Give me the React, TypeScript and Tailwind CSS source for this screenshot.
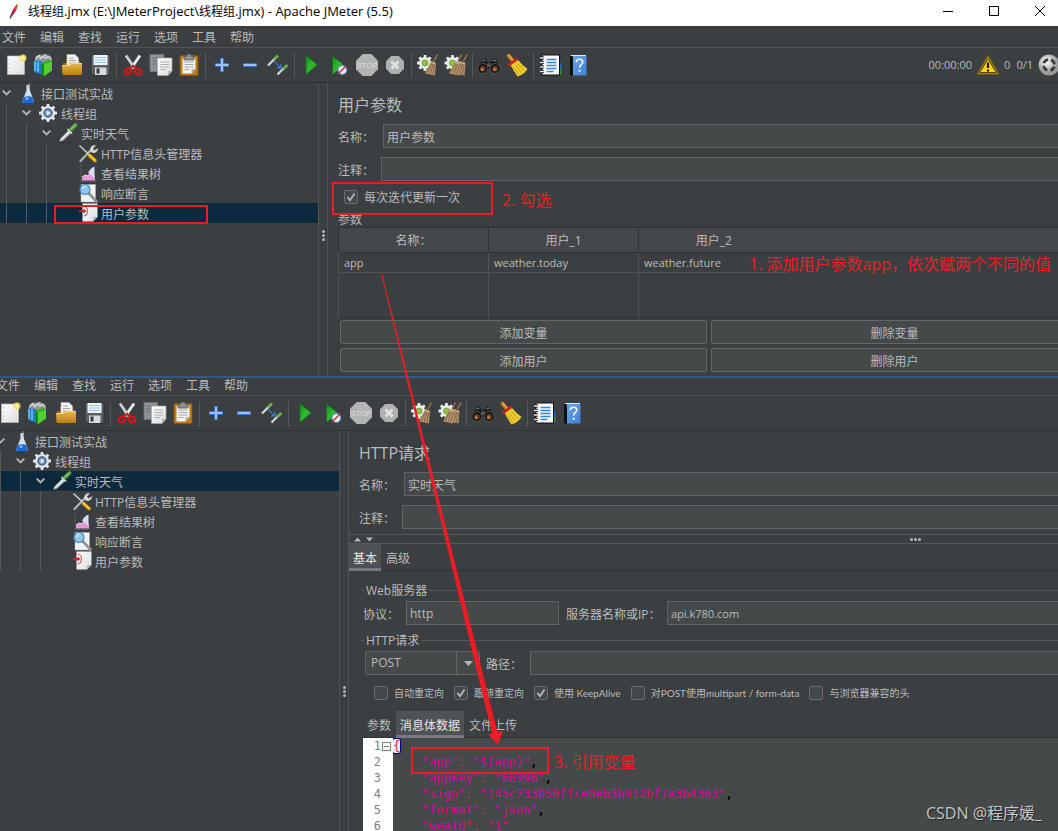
import React from "react";

type IconProps = { children: React.ReactNode };

const Svg = ({ children }: IconProps) => (
  <svg viewBox="0 0 24 24" className="h-6 w-6 shrink-0" aria-hidden="true">
    {children}
  </svg>
);

const Gradients = () => (
  <svg className="absolute h-0 w-0" aria-hidden="true">
    <defs>
      <linearGradient id="paper" x1="0" y1="0" x2="1" y2="1">
        <stop offset="0" stopColor="#ffffff" />
        <stop offset="1" stopColor="#dcdcdc" />
      </linearGradient>
      <linearGradient id="amber" x1="0" y1="0" x2="0" y2="1">
        <stop offset="0" stopColor="#e9b94c" />
        <stop offset="1" stopColor="#bb7f10" />
      </linearGradient>
      <linearGradient id="green" x1="0" y1="0" x2="1" y2="1">
        <stop offset="0" stopColor="#0b8f14" />
        <stop offset="0.5" stopColor="#35b832" />
        <stop offset="1" stopColor="#0a8a10" />
      </linearGradient>
      <linearGradient id="book" x1="0" y1="0" x2="1" y2="1">
        <stop offset="0" stopColor="#6ba4ea" />
        <stop offset="1" stopColor="#3f7fd6" />
      </linearGradient>
      <radialGradient id="glow">
        <stop offset="0" stopColor="#fffbd0" />
        <stop offset="0.5" stopColor="#f6e36a" />
        <stop offset="1" stopColor="#f6e36a" stopOpacity="0" />
      </radialGradient>
      <radialGradient id="ball" cx="0.4" cy="0.35">
        <stop offset="0" stopColor="#ffffff" />
        <stop offset="1" stopColor="#9a9a9a" />
      </radialGradient>
      <linearGradient id="feather" x1="0" y1="1" x2="1" y2="0">
        <stop offset="0" stopColor="#5c2a7e" />
        <stop offset="0.5" stopColor="#c8202c" />
        <stop offset="1" stopColor="#ef7a24" />
      </linearGradient>
    </defs>
  </svg>
);

const gearPoints = [0, 45, 90, 135, 180, 225, 270, 315];

const Gear = ({ x, y, r, fill }: { x: number; y: number; r: number; fill: string }) => (
  <g fill={fill}>
    <circle cx={x} cy={y} r={r} />
    {gearPoints.map((a) => (
      <rect key={a} x={x - 1.4} y={y - r - 2} width="2.8" height="4" rx="0.5" transform={`rotate(${a} ${x} ${y})`} />
    ))}
  </g>
);

const Straw = ({ dx }: { dx: number }) => (
  <g transform={`translate(${dx} 0)`}>
    <path d="M18 8 21.500 1.500" stroke="#9c744a" strokeWidth="1.500" />
    <path d="M15 8 20 9.500 19 22.500 9 20.500Z" fill="#b3926c" />
    <path d="M16 9.500 11 20.500M17.500 10 14 21.500M18.800 10.500 16.800 22" stroke="#7b5c3c" strokeWidth="0.800" />
    <path d="M14.800 9.700 19.800 11.200" stroke="#dcc29c" strokeWidth="0.800" />
  </g>
);

const NoEntry = () => (
  <g>
    <circle cx="15.3" cy="17" r="4.3" fill="#f2f5fb" stroke="#6c93d4" strokeWidth="1.3" />
    <path d="m11.5 20.5 7.5-7.5" stroke="#d8232a" strokeWidth="1.5" />
  </g>
);

const NewIcon = () => (
  <Svg>
    <rect x="3.5" y="3" width="17" height="18.5" fill="url(#paper)" stroke="#b9b9b9" strokeWidth="0.7" />
    <path d="M5.5 6v13" stroke="#b5b5b5" strokeDasharray="1.2 3" />
    <circle cx="19" cy="5" r="4.5" fill="url(#glow)" />
  </Svg>
);
const TemplatesIcon = () => (
  <Svg>
    <path d="M3 7q1-6 6-5 5-2 7 0 4 1 4 5v3H3Z" fill="#8f9598" />
    <path d="M3.500 6.500q1-5 5-1.500M9 6.500q0-5 5-1.500M14 5.500q2-4 5 .5M6 3l2-1M12 2.500l2-.5" stroke="#dfe2e4" fill="none" strokeWidth="1.200" />
    <path d="M1.5 7.500 10 8v13.5L2.5 19Z" fill="#1d83c6" />
    <path d="M3 8.5v9.5M6 8.8v10.4" stroke="#8fd0f4" strokeWidth="1.2" />
    <path d="m9 10 8-3 3 1.5v9L12 23l-3-2Z" fill="#2fae22" />
    <path d="m12 11.5 8-3v9L12 23Z" fill="#53cf35" />
    <path d="m12 11.5-3-1.5v11l3 2Z" fill="#178a17" />
  </Svg>
);
const OpenIcon = () => (
  <Svg>
    <path d="M3 10h3V6l4-1v3h10l1 4v8H3Z" fill="#9c6b12" />
    <path d="M7 1.5h8L18.5 5v9H7Z" fill="#f4f4f4" stroke="#bcbcbc" strokeWidth="0.6" />
    <path d="M9 5h5M9 7.5h7M9 10h7" stroke="#9a9a9a" strokeWidth="0.9" />
    <path d="M2 12h7l2-2h11v10.5q0 1.5-1.5 1.5H4q-1.6 0-1.6-1.5Z" fill="url(#amber)" />
    <path d="M2.6 12.5h7l2-2h10" stroke="#fbe09a" fill="none" strokeWidth="0.8" />
  </Svg>
);
const SaveIcon = () => (
  <Svg>
    <path d="M3 3q0-1 1-1h17q1 0 1 1v18q0 1-1 1H4.5L3 20.5Z" fill="#5a5f62" stroke="#2b2e30" strokeWidth="0.8" />
    <rect x="5.5" y="2" width="14" height="10" fill="#eef4fb" />
    <path d="M7 4.5h11M7 7h11M7 9.500h11" stroke="#9cc0e8" strokeWidth="1.1" />
    <rect x="7" y="14.500" width="11.500" height="7.500" fill="#d8dadb" />
    <rect x="8.500" y="15.500" width="3" height="5" fill="#3a3d3f" />
  </Svg>
);
const CutIcon = () => (
  <Svg>
    <path d="M5 2.500 14 15.500" stroke="#d6d8d9" strokeWidth="2.800" />
    <path d="M19 2.500 10 15.500" stroke="#f0f1f1" strokeWidth="2.800" />
    <path d="M5.600 2 14 14" stroke="#919799" strokeWidth="0.600" />
    <ellipse cx="7" cy="18.500" rx="3.300" ry="2.600" fill="none" stroke="#d3161c" strokeWidth="2.400" transform="rotate(-25 7 18.500)" />
    <ellipse cx="17" cy="18.500" rx="3.300" ry="2.600" fill="none" stroke="#d3161c" strokeWidth="2.400" transform="rotate(25 17 18.500)" />
    <path d="m9 15.500 3-2.500 3 2.500" stroke="#d3161c" strokeWidth="2.200" fill="none" />
  </Svg>
);
const CopyIcon = () => (
  <Svg>
    <rect x="1" y="1.500" width="13.500" height="17" fill="#8f9294" stroke="#70787a" strokeWidth="0.800" />
    <path d="M3.500 5h8M3.500 8h4M3.500 11h4" stroke="#6b6f71" />
    <path d="M8.500 5H23v13l-4 4.500H8.500Z" fill="url(#paper)" stroke="#a5a5a5" strokeWidth="0.700" />
    <path d="M11 9h9M11 11.500h9M11 14h9M11 16.500h6" stroke="#a6a6a6" strokeWidth="0.900" />
    <path d="m19 22.500 0-4.500h4Z" fill="#b8b8b8" />
  </Svg>
);
const PasteIcon = () => (
  <Svg>
    <rect x="3" y="2.500" width="18" height="20" rx="1.500" fill="#bf7a17" stroke="#8a540b" strokeWidth="0.800" />
    <path d="M5.500 5h13v11l-4 4.500h-9Z" fill="#f4f4f3" />
    <path d="M7.500 9h9M7.500 11.500h9M7.500 14h9M7.500 16.500h5" stroke="#9b9b9b" strokeWidth="0.900" />
    <path d="m14.500 20.500 0-4.500h4Z" fill="#b5b5b5" />
    <path d="M7 3.500h2.500q0-2.500 2.500-2.500t2.500 2.500H17V7H7Z" fill="#8d9193" stroke="#55595b" strokeWidth="0.800" />
  </Svg>
);
const PlusIcon = () => (
  <Svg>
    <path d="M12 5v14M5 12h14" stroke="#3a6fc0" strokeWidth="4" />
    <path d="M12 5.700v12.600M5.700 12h12.600" stroke="#9dc1f2" strokeWidth="2" />
  </Svg>
);
const MinusIcon = () => (
  <Svg>
    <path d="M5 12h14" stroke="#3a6fc0" strokeWidth="4" />
    <path d="M5.700 12h12.600" stroke="#9dc1f2" strokeWidth="2" />
  </Svg>
);
const ToggleIcon = () => (
  <Svg>
    <path d="M2 12.500 9 5.500" stroke="#d6d9da" strokeWidth="2.200" />
    <path d="m8 6.500 4-4" stroke="#66b04a" strokeWidth="2.800" />
    <path d="M11.500 21.500 18 15" stroke="#d6d9da" strokeWidth="2.200" />
    <path d="m17 16 4.500-4" stroke="#66b04a" strokeWidth="2.800" />
    <path d="m8.500 8.500 5.500 5.500" stroke="#3c7be0" strokeWidth="1.500" strokeDasharray="2 1" />
    <path d="m15.500 10.500v5h-5Z" fill="#3c7be0" />
  </Svg>
);
const PlayIcon = () => (
  <Svg>
    <path d="M7 2.500 18.500 12 7 21.500Z" fill="url(#green)" stroke="#0b6f12" strokeWidth="0.700" />
  </Svg>
);
const PlayNoPauseIcon = () => (
  <Svg>
    <path d="M5.500 3 17 12 5.500 21.500Z" fill="url(#green)" stroke="#0b6f12" strokeWidth="0.700" />
    <NoEntry />
  </Svg>
);
const StopIcon = () => (
  <Svg>
    <path d="M7.700 1h8.600L23 7.700v8.600L16.300 23H7.700L1 16.300V7.700Z" fill="#b3b4b4" />
    <text x="12" y="15" textAnchor="middle" fontSize="8" fontFamily="Liberation Sans" fill="#dcdddd">STOP</text>
  </Svg>
);
const ShutdownIcon = () => (
  <Svg>
    <path d="M8.200 3h7.600L21 8.200v7.600L15.800 21H8.200L3 15.800V8.200Z" fill="#b0b1b1" />
    <path d="m8.500 8.500 7 7m0-7-7 7" stroke="#e2e3e3" strokeWidth="2.600" />
  </Svg>
);
const ClearIcon = () => (
  <Svg>
    <Gear x={9} y={10} r={6} fill="#eceeee" />
    <circle cx="9" cy="10" r="3" fill="#8cc63a" stroke="#6a8f35" strokeWidth="0.800" />
    <Straw dx={0} />
  </Svg>
);
const ClearAllIcon = () => (
  <Svg>
    <Gear x={8.500} y={10} r={6} fill="#eceeee" />
    <circle cx="8.500" cy="10" r="3" fill="#8cc63a" stroke="#6a8f35" strokeWidth="0.800" />
    <Straw dx={-4} />
    <Straw dx={1.500} />
  </Svg>
);
const SearchIcon = () => (
  <Svg>
    <path d="M4.500 7q2-3 5 0l1 2h3l1-2q3-3 5 0l3.500 9H1Z" fill="#1d1d1d" />
    <path d="M5 8q2-2 3.500 0M15.500 8q2-2 3.500 0" stroke="#8a8a8a" fill="none" />
    <circle cx="5.800" cy="15.500" r="5" fill="#141414" stroke="#5d5d5d" strokeWidth="0.800" />
    <circle cx="18.200" cy="15.500" r="5" fill="#141414" stroke="#5d5d5d" strokeWidth="0.800" />
    <circle cx="5.800" cy="15.800" r="2.800" fill="#6e4126" />
    <circle cx="18.200" cy="15.800" r="2.800" fill="#6e4126" />
    <circle cx="5" cy="16.500" r="1.200" fill="#d08a5a" />
    <circle cx="17.500" cy="16.500" r="1.200" fill="#d08a5a" />
    <circle cx="12" cy="12" r="2" fill="#555" />
  </Svg>
);
const BroomIcon = () => (
  <Svg>
    <path d="m3.500 2.500 5 6" stroke="#b8741d" strokeWidth="4" strokeLinecap="round" />
    <path d="m3.500 2 4.500 5.500" stroke="#e6b04f" strokeWidth="1.200" />
    <path d="M5.500 12 13 7q5 6 9.500 9-3.500 5.500-10 7.500-3.500-5-7-11.500Z" fill="#f0cc30" />
    <path d="m8 13.500 5.500 8M10.500 12l6 8M12.500 10.500l7 7.500" stroke="#b89108" strokeWidth="0.800" />
    <path d="m3.500 12.500 9-7" stroke="#d41f1f" strokeWidth="2.600" />
  </Svg>
);
const ListIcon = () => (
  <Svg>
    <path d="M12 10h11.500v6H12Z" fill="#1c66c9" />
    <path d="M14 16h9.500v5.500H14Z" fill="#219a2b" />
    <rect x="4" y="2" width="17.500" height="20" fill="#fafafa" stroke="#111" strokeWidth="1" />
    <path d="M8.500 6.500h10M8.500 9.500h10M8.500 12.500h10M8.500 15.500h10M8.500 18.500h7" stroke="#3b82e6" strokeWidth="1.300" />
    <path d="M2 5h4M2 9.500h4M2 14h4M2 18.500h4" stroke="#111" strokeWidth="2.800" />
    <path d="M2 5h4M2 9.500h4M2 14h4M2 18.500h4" stroke="#e9e9e9" strokeWidth="1.600" />
  </Svg>
);
const HelpIcon = () => (
  <Svg>
    <path d="M4.500 2H20v1.500H4.500Z" fill="#e8e8ea" />
    <path d="M4 2.500v20h3v-19Z" fill="#0c1118" />
    <rect x="7" y="3" width="13.500" height="19.500" fill="url(#book)" />
    <path d="M10.300 9.200q0-3 3.200-3t3.300 2.800q0 1.600-1.700 2.700-1.400 1-1.400 3" stroke="#fff" strokeWidth="1.500" fill="none" />
    <circle cx="13.700" cy="17.800" r="1.100" fill="#fff" />
  </Svg>
);

const FlaskIcon = () => (
  <Svg>
    <path d="M10.500 4h3.400v5.500l4 10.500q.5 2-1.500 2H7.800Q5.700 22 6.300 20l4.200-10.500Z" fill="#d3e0ec" />
    <path d="M8 16q4-1.500 8.300 0l1.600 4q.5 2-1.500 2H7.800Q5.700 22 6.300 20Z" fill="#1b69d2" />
    <path d="M13.200 2v6" stroke="#8b9094" strokeWidth="1" />
    <circle cx="11" cy="17.500" r="1.500" fill="#7db6f5" />
  </Svg>
);
const ThreadGroupIcon = () => (
  <Svg>
    <Gear x={12} y={12} r={7} fill="#e4e6e8" />
    <circle cx="12" cy="12" r="4" fill="#7d9cc9" stroke="#3e5f96" strokeWidth="1.400" />
    <path d="m10.800 9.800 3.600 2.200-3.600 2.200Z" fill="#f4f8ff" />
  </Svg>
);
const SamplerIcon = () => (
  <Svg>
    <path d="M4 21.500h15" stroke="#2b2d2e" strokeWidth="1" />
    <path d="m3.500 20.500 1-3 8-8 2.500 2.500-8 7.500Z" fill="#c7cccd" stroke="#8c9293" strokeWidth="0.500" />
    <path d="m5 19 8-8" stroke="#fff" strokeWidth="0.900" />
    <path d="m11.500 8 4.500 4.500" stroke="#e4e7e7" strokeWidth="1.600" />
    <path d="m15 8.500 4.500-4.500" stroke="#5ea548" strokeWidth="3.800" strokeLinecap="round" />
    <path d="m14.500 8 4-4" stroke="#9bd486" strokeWidth="1" />
  </Svg>
);
const ConfigIcon = () => (
  <Svg>
    <path d="m4.500 20 10-10.500" stroke="#aeb3b5" strokeWidth="2.200" strokeLinecap="round" />
    <path d="M15 11q-2-3 .5-5.500 1.800-1.800 4.500-1l-3 3 1.500 2 3.500-2.500q0 3-2.500 4.500-2 1-4.500-.5Z" fill="#d4d8d9" />
    <path d="m3.500 4.500 9 8.500" stroke="#d0d3d4" strokeWidth="1.500" />
    <path d="m13.500 14.500 5.500 5" stroke="#e8a813" strokeWidth="3.400" strokeLinecap="round" />
    <path d="m13 13.500 6.500 6" stroke="#ffe07a" strokeWidth="1" />
  </Svg>
);
const ResultIcon = () => (
  <Svg>
    <path d="M5 3v17M5 20.500h15" stroke="#6d7173" strokeDasharray="1 1" />
    <path d="M6 19.500v-3l3-2.500 3 1 2-3.500h2l3 4v4Z" fill="#e79ada" />
    <path d="M12 12q2-5 6.500-6.500v11l-4-3.500Z" fill="#cfdcfa" />
    <path d="m6 16 3-2 3 1 2-3 4 4" stroke="#fbd3f3" fill="none" />
  </Svg>
);
const AssertionIcon = () => (
  <Svg>
    <path d="M5 3.500h14.500V21H5Z" fill="#f1f2f2" stroke="#b3b3b3" strokeWidth="0.500" />
    <path d="m12.500 12 8 8.500" stroke="#8f9395" strokeWidth="2.600" strokeLinecap="round" />
    <circle cx="9" cy="8.500" r="5" fill="#8fc8ef" stroke="#4f88b8" strokeWidth="1.200" />
    <path d="M6.500 8q.5-2.500 3-3" stroke="#e7f5ff" fill="none" strokeWidth="1.200" />
  </Svg>
);
const ParamsIcon = () => (
  <Svg>
    <path d="M6.500 2.500h15V16L17 20.500H6.500Z" fill="url(#paper)" />
    <path d="M17 20.500 17.500 16l4 0Z" fill="#aeb1b2" />
    <path d="M3 10h6" stroke="#c62828" strokeWidth="1.800" />
    <path d="m7.500 7.500 3 2.500-3 2.500" fill="#c62828" />
    <path d="M7.500 5q4 .5 4 5t-4 5" stroke="#cf6a6a" fill="none" strokeWidth="1.200" />
  </Svg>
);

const toolGroups: { name: string; Icon: () => React.JSX.Element }[][] = [
  [
    { name: "新建", Icon: NewIcon },
    { name: "模板", Icon: TemplatesIcon },
    { name: "打开", Icon: OpenIcon },
    { name: "保存", Icon: SaveIcon },
  ],
  [
    { name: "剪切", Icon: CutIcon },
    { name: "复制", Icon: CopyIcon },
    { name: "粘贴", Icon: PasteIcon },
  ],
  [
    { name: "展开", Icon: PlusIcon },
    { name: "折叠", Icon: MinusIcon },
    { name: "切换", Icon: ToggleIcon },
  ],
  [
    { name: "启动", Icon: PlayIcon },
    { name: "不停顿开始", Icon: PlayNoPauseIcon },
    { name: "停止", Icon: StopIcon },
    { name: "关闭", Icon: ShutdownIcon },
  ],
  [
    { name: "清除", Icon: ClearIcon },
    { name: "清除全部", Icon: ClearAllIcon },
  ],
  [
    { name: "查找", Icon: SearchIcon },
    { name: "重置搜索", Icon: BroomIcon },
  ],
  [
    { name: "函数助手", Icon: ListIcon },
    { name: "帮助", Icon: HelpIcon },
  ],
];

const menus = ["文件", "编辑", "查找", "运行", "选项", "工具", "帮助"];

const MenuBar = () => (
  <nav className="flex h-5 items-center gap-[14px] border-b border-[#515151] px-[2px]">
    {menus.map((m) => (
      <button key={m} className="leading-4">{m}</button>
    ))}
  </nav>
);

const Toolbar = ({ children }: { children?: React.ReactNode }) => (
  <div className="flex h-[35px] shrink-0 items-center border-b border-[#323232] pl-[2px]">
    {toolGroups.map((group, i) => (
      <div key={i} className="flex shrink-0 items-center">
        {i > 0 && <div className="mx-[2px] h-[25px] w-px bg-[#56595b]" />}
        {group.map(({ name, Icon }) => (
          <button key={name} aria-label={name} className="flex w-7 justify-center">
            <Icon />
          </button>
        ))}
      </div>
    ))}
    {children}
  </div>
);

const treeNodes = [
  { level: 0, label: "接口测试实战", Icon: FlaskIcon, open: true },
  { level: 1, label: "线程组", Icon: ThreadGroupIcon, open: true },
  { level: 2, label: "实时天气", Icon: SamplerIcon, open: true },
  { level: 3, label: "HTTP信息头管理器", Icon: ConfigIcon, open: false },
  { level: 3, label: "查看结果树", Icon: ResultIcon, open: false },
  { level: 3, label: "响应断言", Icon: AssertionIcon, open: false },
  { level: 3, label: "用户参数", Icon: ParamsIcon, open: false },
];

const Tree = ({ selected, marked }: { selected: string; marked?: boolean }) => (
  <ul>
    {treeNodes.map(({ level, label, Icon, open }) => (
      <li
        key={label}
        className={label === selected ? "relative flex h-5 items-center bg-[#0d293e]" : "relative flex h-5 items-center"}
      >
        {Array.from({ length: level }, (_, i) => (
          <span key={i} className="flex h-5 w-5 shrink-0 pl-[6px]">
            <span className="w-px bg-[#56595b]" />
          </span>
        ))}
        <span className="flex w-[13px] shrink-0 justify-center">
          {open && (
            <svg viewBox="0 0 9 6" className="h-[6px] w-[9px]" aria-hidden="true">
              <path d="m.7.7 3.800 3.800L8.300.7" fill="none" stroke="#b4b6b7" strokeWidth="1.900" />
            </svg>
          )}
        </span>
        <span className="mr-px ml-[3px] flex h-5 items-center">
          <Icon />
        </span>
        <span className="pt-[3px] whitespace-nowrap">{label}</span>
        {marked && label === selected && (
          <span className="absolute top-[2px] left-[54px] h-[19px] w-[154px] border-2 border-[#ed1c24]" />
        )}
      </li>
    ))}
  </ul>
);

const Dots = ({ vertical }: { vertical?: boolean }) => (
  <span className={vertical ? "flex flex-col gap-px" : "flex gap-px"}>
    <i className="h-[3px] w-[3px] rounded-full bg-[#b4b6b7]" />
    <i className="h-[3px] w-[3px] rounded-full bg-[#b4b6b7]" />
    <i className="h-[3px] w-[3px] rounded-full bg-[#b4b6b7]" />
  </span>
);

const Splitter = ({ low }: { low?: boolean }) => (
  <div
    className={
      low
        ? "flex w-[10px] shrink-0 items-center justify-center border-x border-[#515151] pt-[120px]"
        : "flex w-[10px] shrink-0 items-center justify-center border-x border-[#515151] pt-3"
    }
  >
    <Dots vertical />
  </div>
);

const field = "h-6 min-w-0 border border-[#646464] bg-[#45494a] px-[3px] outline-none";

const NameFields = ({ id, title, value }: { id: string; title: string; value: string }) => (
  <div className="pt-[10px] pl-[10px]">
    <h1 className="text-base leading-6">{title}</h1>
    <div className="mt-[7px] flex items-center">
      <label htmlFor={`${id}-name`} className="w-[45px] shrink-0 pt-[3px]">名称：</label>
      <input id={`${id}-name`} defaultValue={value} className={`${field} flex-1 border-r-0 pt-[2px]`} />
    </div>
    <div className="mt-[9px] flex items-center">
      <label htmlFor={`${id}-note`} className="w-[43px] shrink-0 pt-[3px]">注释：</label>
      <input id={`${id}-note`} className={`${field} flex-1 border-r-0`} />
    </div>
  </div>
);

const Check = ({ label, checked, small }: { label: string; checked?: boolean; small?: boolean }) => (
  <label
    className={
      small
        ? "flex shrink-0 items-center gap-[6px] font-['Lato','Noto_Sans_CJK_SC',sans-serif] text-[10px]"
        : "flex shrink-0 items-center gap-[6px]"
    }
  >
    <span className="relative flex">
      <input
        type="checkbox"
        defaultChecked={checked}
        className="peer h-[14px] w-[14px] appearance-none rounded-[2px] border border-[#6b6b6b] bg-[#43494a]"
      />
      <svg viewBox="0 0 14 14" className="pointer-events-none absolute inset-0 hidden h-[14px] w-[14px] peer-checked:block" aria-hidden="true">
        <path d="m3.500 7 2.500 3.200L10.500 3.500" fill="none" stroke="#b4b6b7" strokeWidth="1.900" />
      </svg>
    </span>
    <span className="pt-[2px] whitespace-nowrap">{label}</span>
  </label>
);

const Group = ({ title }: { title: string }) => (
  <div className="flex h-4 items-center">
    <span className="mr-[2px] h-px w-[3px] bg-[#56595b]" />
    <h2 className="pt-[2px]">{title}</h2>
    <span className="ml-[2px] h-px flex-1 bg-[#56595b]" />
  </div>
);

const Tab = ({ label, active }: { label: string; active?: boolean }) => (
  <button
    className={
      active
        ? "h-[27px] border-b-[3px] border-[#747a80] bg-[#4e5254] px-1 pt-[5px] text-[#e6e6e6]"
        : "h-[27px] border-b-[3px] border-transparent px-1 pt-[5px]"
    }
  >
    {label}
  </button>
);

const cell = "border-r border-[#515151] px-[5px] pt-[2px]";
const headCell = "w-[150px] pt-[2px] text-center font-normal";

const ParamTable = () => (
  <table className="w-full table-fixed border-collapse border-b border-[#323232] text-left">
    <thead>
      <tr className="h-[25px] border-y border-l border-[#323232] bg-[#45484a]">
        <th className={`${headCell} border-r border-[#323232]`}>名称：</th>
        <th className={`${headCell} border-r border-[#323232]`}>用户_1</th>
        <th className={headCell}>用户_2</th>
        <th />
      </tr>
    </thead>
    <tbody className="text-[11px]">
      <tr className="h-5">
        <td className={`${cell} border-b border-l`}>app</td>
        <td className={`${cell} border-b`}>weather.today</td>
        <td className="border-b border-[#515151] px-[5px] pt-[2px]">weather.future</td>
        <td />
      </tr>
      <tr className="h-[45px]">
        <td className={`${cell} border-l`} />
        <td className={cell} />
        <td />
        <td />
      </tr>
    </tbody>
  </table>
);

const codeLines: [string, string][] = [
  ['"app"', '"${app}"'],
  ['"appkey"', '"66996"'],
  ['"sign"', '"145c733050ffce0eb3b912bf7a3b4363"'],
  ['"format"', '"json"'],
  ['"weaId"', '"1"'],
];

const Editor = () => (
  <div className="ml-[14px] flex min-h-0 flex-1 overflow-hidden bg-[#45494a] font-['DejaVu_Sans_Mono','Liberation_Mono',monospace] text-xs leading-4">
    <div className="relative w-[30px] shrink-0 bg-white pr-3 text-right text-[#808080]">
      {["1", "2", "3", "4", "5", "6"].map((n) => (
        <div key={n}>{n}</div>
      ))}
      <span className="absolute top-1 right-[2px] flex h-[9px] w-[9px] items-center justify-center border border-[#808080]">
        <i className="h-px w-[5px] bg-[#808080]" />
      </span>
    </div>
    <pre className="font-[inherit] text-[#e0009a]">
      <span className="rounded-[2px] bg-[#eaeaff] text-[#ff2020] ring-1 ring-[#000080]">{"{"}</span>
      {codeLines.map(([key, value], i) => (
        <React.Fragment key={key}>
          {"\n    "}
          {key}
          <span className="text-[#a04040]">:</span> {value}
          {i < codeLines.length - 1 && <span className="font-bold text-black">,</span>}
        </React.Fragment>
      ))}
    </pre>
  </div>
);

const button = "h-6 rounded-[2px] border border-[#646668] bg-[#45494a] pt-[3px]";
const note = "absolute whitespace-nowrap text-base leading-5 text-[#ed1c24]";

export default function App() {
  return (
    <div className="relative flex h-screen w-full flex-col overflow-hidden bg-[#3c3f41] font-['Open_Sans','Noto_Sans_CJK_SC',sans-serif] text-xs text-[#bbbbbb]">
      <Gradients />
      <header className="flex h-[26px] shrink-0 items-center overflow-hidden bg-white text-black">
        <svg viewBox="0 0 14 18" className="mb-[4px] ml-[7px] h-[18px] w-[14px]" aria-hidden="true">
          <path d="M3.500 15.500Q4.500 8 9.500 2.500q1.800-1 1.500 1Q9.500 9 6 13Z" fill="url(#feather)" />
          <path d="m3 16.500 2-5" stroke="#4a2a6a" strokeWidth="1.200" />
        </svg>
        <span className="mb-[4px] ml-[7px] flex-1 text-[13px] leading-5 whitespace-nowrap">
          <span className="text-xs">线程组</span>.jmx (E:\JMeterProject\<span className="text-xs">线程组</span>.jmx) - Apache JMeter (5.5)
        </span>
        <div className="-mr-[5px] flex pb-[5px]">
          <button aria-label="最小化" className="flex w-[46px] justify-center">
            <svg viewBox="0 0 10 10" className="h-[10px] w-[10px]"><path d="M0 5.500h10" stroke="#000" /></svg>
          </button>
          <button aria-label="最大化" className="flex w-[46px] justify-center">
            <svg viewBox="0 0 10 10" className="h-[10px] w-[10px]"><path d="M.5.500h9v9h-9Z" fill="none" stroke="#000" /></svg>
          </button>
          <button aria-label="关闭窗口" className="flex w-[46px] justify-center">
            <svg viewBox="0 0 10 10" className="h-[10px] w-[10px]"><path d="m0 0 10 10M10 0 0 10" stroke="#000" /></svg>
          </button>
        </div>
      </header>

      <section className="shrink-0 overflow-hidden pt-[2px]">
        <MenuBar />
        <Toolbar>
          <div className="-mr-[2px] ml-auto flex items-center text-[11px]">
            <span>00:00:00</span>
            <svg viewBox="0 0 24 22" className="mx-1 h-[22px] w-6" aria-hidden="true">
              <path d="M12 2 22.500 20H1.500Z" fill="#ffd21a" stroke="#7a6508" strokeWidth="1.600" strokeLinejoin="round" />
              <path d="M12 5 20 18.500H4Z" fill="none" stroke="#2a2406" strokeWidth="0.800" />
              <path d="M12 8.500v5.500M12 15.500v2" stroke="#1c1804" strokeWidth="2.200" />
            </svg>
            <span className="mr-[6px]">0</span>
            <span className="mr-[5px]">0/1</span>
            <svg viewBox="0 0 22 22" className="h-[22px] w-[22px]" aria-hidden="true">
              <circle cx="11" cy="11" r="10.500" fill="url(#ball)" />
              <circle
                cx="11"
                cy="11"
                r="5.500"
                fill="none"
                stroke="#3c3f41"
                strokeWidth="2.800"
                strokeDasharray="5.600 3.040"
                transform="rotate(15.800 11 11)"
              />
            </svg>
          </div>
        </Toolbar>
        <div className="flex">
          <aside className="w-[318px] shrink-0">
            <Tree selected="用户参数" marked />
          </aside>
          <Splitter />
          <main className="min-w-0 flex-1">
            <NameFields id="params" title="用户参数" value="用户参数" />
            <div className="relative mt-[6px] flex h-5 items-center pl-4">
              <Check label="每次迭代更新一次" checked />
              <span className="absolute -top-[5px] left-1 h-[33px] w-[161px] border-[2px] border-[#ed1c24]" />
              <span className={`${note} top-[3px] left-[174px]`}>2. 勾选</span>
            </div>
            <h2 className="mt-[6px] pl-[10px] leading-[14px]">参数</h2>
            <div className="relative pl-[10px]">
              <ParamTable />
              <span className={`${note} top-[27px] left-[421px]`}>1. 添加用户参数app，依次赋两个不同的值</span>
            </div>
            <div className="-mr-5 grid grid-cols-2 gap-1 pt-[2px] pb-1 pl-3">
              <button className={button}>添加变量</button>
              <button className={button}>删除变量</button>
              <button className={button}>添加用户</button>
              <button className={button}>删除用户</button>
            </div>
          </main>
        </div>
      </section>

      <section className="-ml-[6px] flex min-h-0 flex-1 flex-col border-t-2 border-[#365880]">
        <div className="-mt-[2px] shrink-0">
          <MenuBar />
        </div>
        <Toolbar />
        <div className="flex min-h-0 flex-1">
          <aside className="w-[345px] shrink-0">
            <Tree selected="实时天气" />
          </aside>
          <Splitter low />
          <main className="flex min-w-0 flex-1 flex-col">
            <NameFields id="http" title="HTTP请求" value="实时天气" />
            <div className="mt-[5px] flex h-[10px] shrink-0 items-center border-y border-[#56595b] pl-1">
              <svg viewBox="0 0 22 5" className="h-[5px] w-[22px]" aria-hidden="true">
                <path d="M1 4.500 4.500.500 8 4.500ZM13 .500h7L16.500 4.500Z" fill="#b4b6b7" />
              </svg>
              <span className="flex flex-1 justify-center pl-[397px]">
                <Dots />
              </span>
            </div>
            <div className="flex h-[27px] shrink-0 gap-px border-b border-[#323232]">
              <Tab label="基本" active />
              <Tab label="高级" />
            </div>
            <div className="mt-[11px] shrink-0 pl-3">
              <Group title="Web服务器" />
              <div className="mt-[3px] flex items-center pl-[2px]">
                <label htmlFor="protocol" className="w-[43px] shrink-0 pt-[3px]">协议：</label>
                <input id="protocol" defaultValue="http" className={`${field} w-[153px] shrink-0`} />
                <label htmlFor="server" className="ml-[7px] w-[101px] shrink-0 pt-[3px] whitespace-nowrap">服务器名称或IP：</label>
                <input id="server" defaultValue="api.k780.com" className={`${field} flex-1 border-r-0 text-[11px]`} />
              </div>
              <div className="mt-[7px]">
                <Group title="HTTP请求" />
              </div>
              <div className="mt-[3px] flex items-center pl-1">
                <div className="relative w-[115px] shrink-0">
                  <select aria-label="方法" className="h-6 w-full appearance-none rounded-[2px] border border-[#646464] bg-[#45494a] px-[5px] outline-none">
                    <option>POST</option>
                    <option>GET</option>
                  </select>
                  <span className="pointer-events-none absolute top-0 right-0 flex h-6 w-6 items-center justify-center border-l border-[#646464]">
                    <svg viewBox="0 0 9 5" className="h-[5px] w-[9px]" aria-hidden="true">
                      <path d="M0 0h9L4.500 5Z" fill="#b4b6b7" />
                    </svg>
                  </span>
                </div>
                <label htmlFor="path" className="ml-[6px] w-[44px] shrink-0 pt-[3px]">路径：</label>
                <input id="path" className={`${field} flex-1 border-r-0`} />
              </div>
              <div className="mt-2 flex h-5 items-center gap-[10px] pl-[13px]">
                <Check small label="自动重定向" />
                <Check small label="跟随重定向" checked />
                <Check small label="使用 KeepAlive" checked />
                <Check small label="对POST使用multipart / form-data" />
                <Check small label="与浏览器兼容的头" />
              </div>
            </div>
            <div className="mt-2 ml-[14px] flex h-[27px] shrink-0 gap-px border-b border-[#323232]">
              <Tab label="参数" />
              <Tab label="消息体数据" active />
              <Tab label="文件上传" />
            </div>
            <div className="relative flex min-h-0 flex-1 flex-col">
              <Editor />
              <span className="absolute top-[9px] left-[62px] h-[27px] w-[138px] border-2 border-[#ed1c24]" />
              <span className={`${note} top-[14px] left-[205px]`}>3. 引用变量</span>
            </div>
          </main>
        </div>
      </section>

      <svg viewBox="0 0 124 473" className="pointer-events-none absolute top-[273px] left-[381px] h-[473px] w-[124px]" aria-hidden="true">
        <path d="M0 0h1L116.500 459l5.500-1L117 472 107.500 461.500l3.500-1Z" fill="#ed1c24" />
      </svg>
      <span className="absolute right-4 bottom-[6px] text-base leading-6 whitespace-nowrap text-[#c4c6c7] [text-shadow:1px_1px_1px_#222]">
        CSDN @程序媛_
      </span>
    </div>
  );
}
